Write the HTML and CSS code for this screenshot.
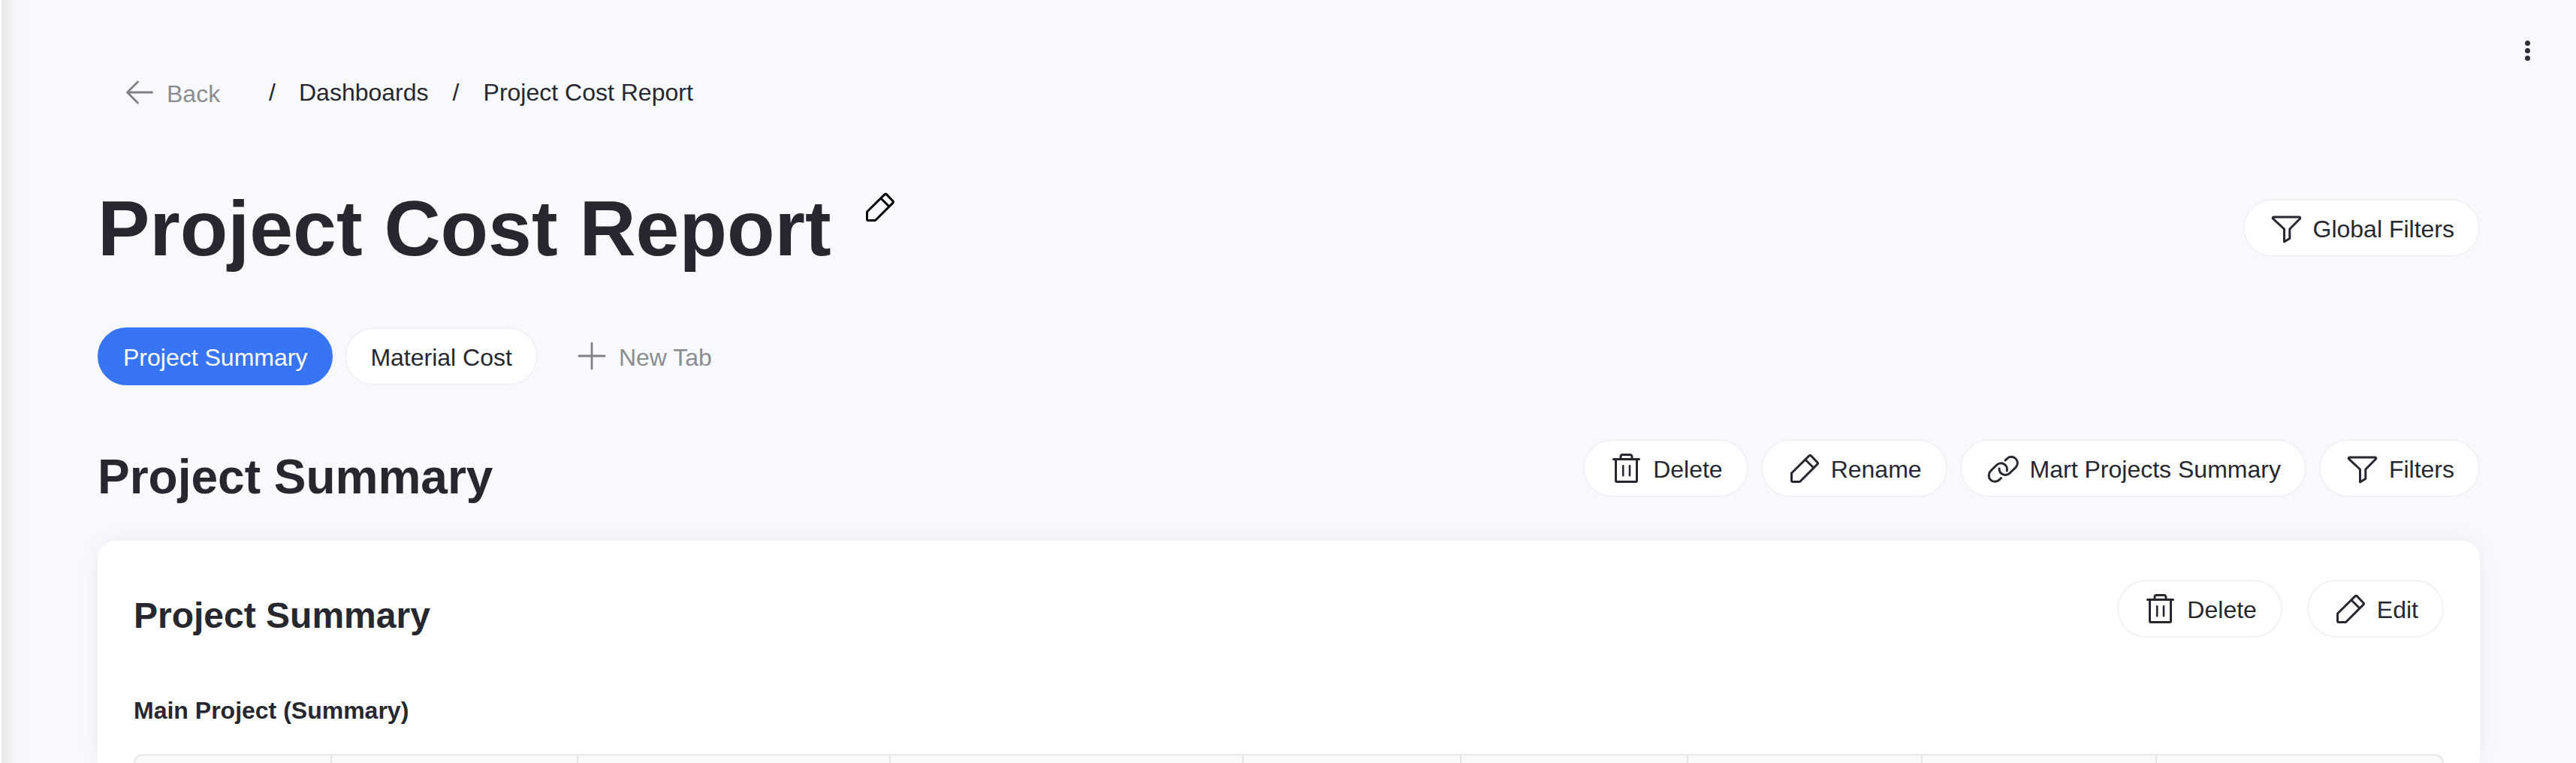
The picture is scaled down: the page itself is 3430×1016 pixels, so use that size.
FILE: index.html
```html
<!DOCTYPE html>
<html lang="en">
<head>
<meta charset="utf-8">
<title>Project Cost Report</title>
<link rel="stylesheet" href="styles.css">
</head>
<body>
<svg class="sprite" aria-hidden="true">
  <symbol id="trash" viewBox="0 0 48 48"><path d="M9.500 12.500V41a1.500 1.500 0 0 0 1.500 1.500h25a1.500 1.500 0 0 0 1.500-1.500V12.500M6.500 12.500h34M16 11.500V9a2.500 2.500 0 0 1 2.500-2.500h10A2.500 2.500 0 0 1 31 9v2.500"/><path stroke-width="2.600" d="M19.200 21.300v13M28 21.300v13"/></symbol>
  <symbol id="pencil" viewBox="0 0 48 48"><path d="M6.500 31 30.200 7.600a1.400 1.400 0 0 1 2 0l8.700 9.100a1.700 1.700 0 0 1 0 2.400L17.500 42.500H8A1.500 1.500 0 0 1 6.500 41ZM24.800 13 36 24"/></symbol>
  <symbol id="filter" viewBox="0 0 48 48"><path d="M6.500 10h34a1.300 1.300 0 0 1 .9 2.200L27.800 26v12.500L20.500 43V26L5.600 12.200A1.300 1.300 0 0 1 6.500 10Z"/></symbol>
  <symbol id="link" viewBox="0 0 48 48"><path d="M26 14 28.300 11.800A8.200 8.200 0 0 1 40 23.400L32 31A8.200 8.200 0 0 1 18 25M28.300 28A8.200 8.200 0 0 0 14.500 20.300L6.500 28.300A8.200 8.200 0 0 0 18.200 39.900L20.500 37.500"/></symbol>
  <symbol id="arrow" viewBox="0 0 48 48"><path d="M40.500 24H7.500M21.500 10 7.500 24l14 14"/></symbol>
  <symbol id="plus" viewBox="0 0 48 48"><path d="M24 7v34M7 24h34"/></symbol>
</svg>
<div class="edge"></div>
<button class="more" aria-label="More"><i></i><i></i><i></i></button>
<main class="page">
  <nav class="crumbs">
    <a class="back"><svg class="icon"><use href="#arrow"/></svg>Back</a>
    <span class="slash">/</span><a>Dashboards</a><span class="slash">/</span><a>Project Cost Report</a>
  </nav>
  <header class="title-row">
    <h1>Project Cost Report</h1>
    <svg class="icon title-edit"><use href="#pencil"/></svg>
    <button class="pill global"><svg class="icon"><use href="#filter"/></svg>Global Filters</button>
  </header>
  <div class="tabs">
    <button class="pill active">Project Summary</button>
    <button class="pill">Material Cost</button>
    <button class="new-tab"><svg class="icon"><use href="#plus"/></svg>New Tab</button>
  </div>
  <div class="section-row">
    <h2>Project Summary</h2>
    <div class="actions">
      <button class="pill"><svg class="icon"><use href="#trash"/></svg>Delete</button>
      <button class="pill"><svg class="icon"><use href="#pencil"/></svg>Rename</button>
      <button class="pill"><svg class="icon"><use href="#link"/></svg>Mart Projects Summary</button>
      <button class="pill"><svg class="icon"><use href="#filter"/></svg>Filters</button>
    </div>
  </div>
  <section class="card">
    <div class="card-head">
      <h3>Project Summary</h3>
      <div class="actions wide">
        <button class="pill"><svg class="icon"><use href="#trash"/></svg>Delete</button>
        <button class="pill"><svg class="icon"><use href="#pencil"/></svg>Edit</button>
      </div>
    </div>
    <h4>Main Project (Summary)</h4>
    <div class="table"><span></span><span></span><span></span><span></span><span></span><span></span><span></span><span></span><span></span></div>
  </section>
</main>
</body>
</html>
```
FILE: styles.css
```css
* { box-sizing: border-box; }
html, body { height: 100%; }
body {
  margin: 0;
  overflow: hidden;
  position: relative;
  background: #f8f9fd;
  color: #27272f;
  font: 32px/38px "Liberation Sans", Arial, sans-serif;
}
h1, h2, h3, h4 { margin: 0; font-weight: 700; }
button { font: inherit; color: inherit; border: 0; background: none; padding: 0; }
.sprite { position: absolute; width: 0; height: 0; }
.edge {
  position: absolute;
  left: 0; top: 0; bottom: 0;
  width: 36px;
  border-left: 2px solid #fff;
  background: linear-gradient(90deg, #e9eaec, #f1f2f4 35%, #f6f7fa 68%, #f8f9fd);
}
.more {
  position: absolute;
  top: 54px; left: 3362px;
  display: flex; flex-direction: column; align-items: center; gap: 3px;
  width: 7px;
}
.more i { width: 7px; height: 7px; border-radius: 50%; background: #2f2f3a; }
.page { height: 1016px; padding: 0 128px 0 130px; display: flex; flex-direction: column; }
.icon {
  width: 48px; height: 48px; flex: none;
  fill: none; stroke: currentColor; stroke-width: 3;
  stroke-linecap: round; stroke-linejoin: round;
}
.crumbs { display: flex; align-items: center; height: 38px; margin-top: 104px; padding-left: 32px; }
.back { display: flex; align-items: center; gap: 12px; color: #8c8d90; width: 196px; margin-top: 4px; }
.back .icon { margin-top: -4px; }
.back .icon, .new-tab .icon { stroke: #808183; stroke-width: 2.800; }
.slash { width: 40px; }
.slash + a + .slash { margin-left: 32px; width: 41px; }
.title-row { display: flex; align-items: center; height: 119px; margin-top: 102px; }
h1 { font-size: 104px; line-height: 120px; padding-top: 1px; }
.title-edit { margin: -57px 0 0 41px; color: #000; }
.pill {
  display: inline-flex; align-items: center; gap: 11px;
  height: 77px; padding: 2px 32px 0;
  border: 2px solid #f1f2f7; border-radius: 39px;
  background: #fff; white-space: nowrap;
}
.pill .icon { margin-top: -3px; }
.global { margin-left: auto; }
.tabs { display: flex; gap: 16px; height: 77px; margin-top: 73px; }
.active { background: #3875f6; border-color: #3875f6; color: #fff; }
.new-tab { display: flex; align-items: center; gap: 12px; margin-left: 32px; color: #8c8d90; padding-top: 2px; }
.new-tab .icon { margin-top: -3px; }
.section-row { display: flex; justify-content: space-between; height: 135px; margin-top: 72px; }
h2 { font-size: 64px; line-height: 72px; padding-top: 14px; }
.actions { display: flex; gap: 17px; }
.wide { gap: 33px; }
.card {
  flex: 1;
  padding: 52px 48px 0;
  border-radius: 24px 24px 0 0;
  background: #fff;
  box-shadow: 0 0 28px rgba(30, 35, 60, .06);
  display: flex; flex-direction: column;
}
.card-head { display: flex; justify-content: space-between; height: 77px; }
h3 { font-size: 48px; line-height: 56px; padding-top: 20px; }
h4 { font-size: 32px; line-height: 38px; margin-top: 78px; }
.table {
  flex: 1;
  margin-top: 39px;
  display: grid;
  grid-template-columns: 260px 328px 416px 470px 290px 302px 312px 312px 1fr;
  border: 2px solid #e8e8e8; border-bottom: 0;
  border-radius: 16px 16px 0 0;
  background: #f8f9fb;
}
.table span + span { border-left: 2px solid #e4e5e6; }
```
